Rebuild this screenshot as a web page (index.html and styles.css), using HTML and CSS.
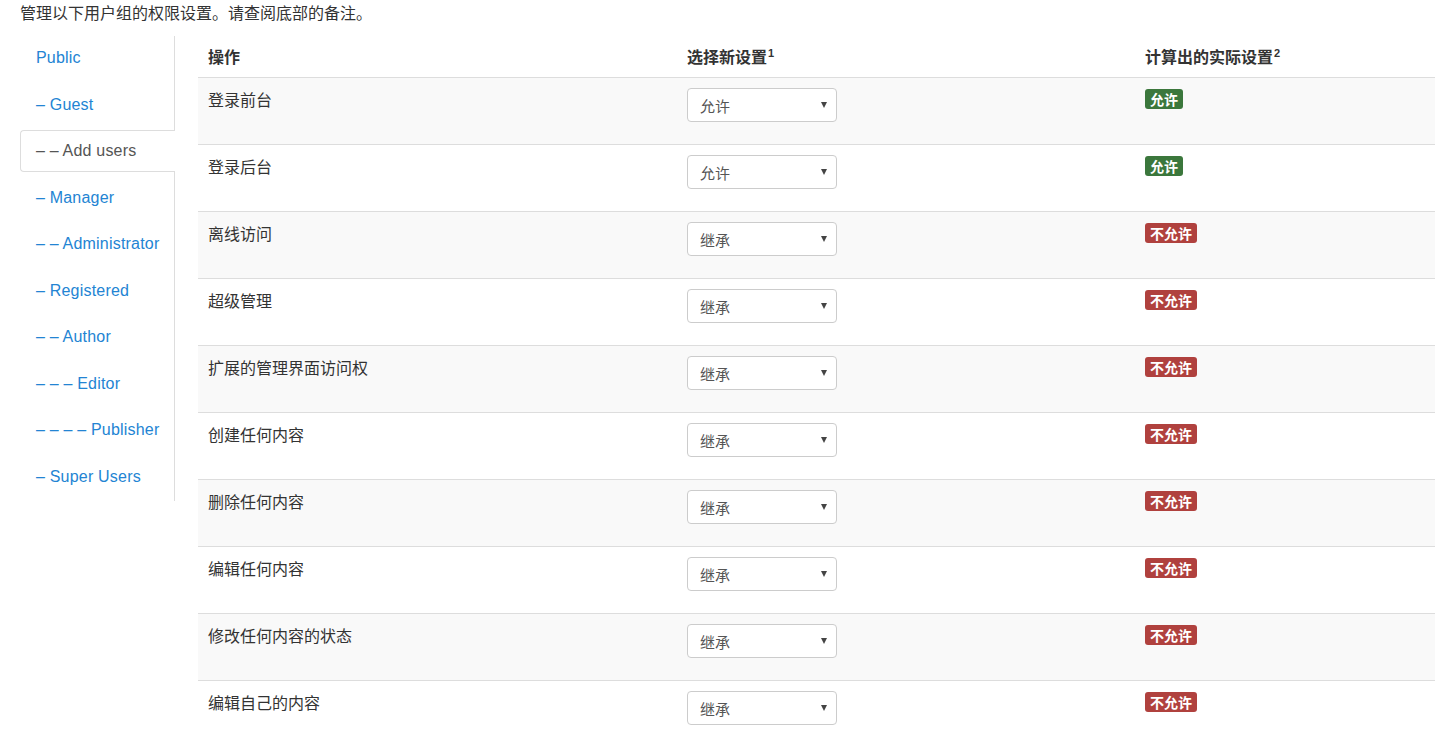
FILE: index.html
```html
<!DOCTYPE html>
<html lang="zh">
<head>
<meta charset="utf-8">
<title>权限设置</title>
<link rel="stylesheet" href="styles.css">
</head>
<body>
<div class="page">
  <p class="intro">管理以下用户组的权限设置。请查阅底部的备注。</p>
  <div class="layout">
    <ul class="groups">
      <li><a href="#">Public</a></li>
      <li><a href="#">– Guest</a></li>
      <li class="active"><a href="#">– – Add users</a></li>
      <li><a href="#">– Manager</a></li>
      <li><a href="#">– – Administrator</a></li>
      <li><a href="#">– Registered</a></li>
      <li><a href="#">– – Author</a></li>
      <li><a href="#">– – – Editor</a></li>
      <li><a href="#">– – – – Publisher</a></li>
      <li><a href="#">– Super Users</a></li>
    </ul>
    <div class="content">
      <table class="perms">
        <colgroup>
          <col class="c1"><col class="c2"><col class="c3">
        </colgroup>
        <thead>
          <tr>
            <th>操作</th>
            <th>选择新设置<sup>1</sup></th>
            <th>计算出的实际设置<sup>2</sup></th>
          </tr>
        </thead>
        <tbody>
          <tr>
            <td>登录前台</td>
            <td><div class="select"><select><option>允许</option></select><span class="caret"></span></div></td>
            <td><span class="badge ok">允许</span></td>
          </tr>
          <tr>
            <td>登录后台</td>
            <td><div class="select"><select><option>允许</option></select><span class="caret"></span></div></td>
            <td><span class="badge ok">允许</span></td>
          </tr>
          <tr>
            <td>离线访问</td>
            <td><div class="select"><select><option>继承</option></select><span class="caret"></span></div></td>
            <td><span class="badge no">不允许</span></td>
          </tr>
          <tr>
            <td>超级管理</td>
            <td><div class="select"><select><option>继承</option></select><span class="caret"></span></div></td>
            <td><span class="badge no">不允许</span></td>
          </tr>
          <tr>
            <td>扩展的管理界面访问权</td>
            <td><div class="select"><select><option>继承</option></select><span class="caret"></span></div></td>
            <td><span class="badge no">不允许</span></td>
          </tr>
          <tr>
            <td>创建任何内容</td>
            <td><div class="select"><select><option>继承</option></select><span class="caret"></span></div></td>
            <td><span class="badge no">不允许</span></td>
          </tr>
          <tr>
            <td>删除任何内容</td>
            <td><div class="select"><select><option>继承</option></select><span class="caret"></span></div></td>
            <td><span class="badge no">不允许</span></td>
          </tr>
          <tr>
            <td>编辑任何内容</td>
            <td><div class="select"><select><option>继承</option></select><span class="caret"></span></div></td>
            <td><span class="badge no">不允许</span></td>
          </tr>
          <tr>
            <td>修改任何内容的状态</td>
            <td><div class="select"><select><option>继承</option></select><span class="caret"></span></div></td>
            <td><span class="badge no">不允许</span></td>
          </tr>
          <tr>
            <td>编辑自己的内容</td>
            <td><div class="select"><select><option>继承</option></select><span class="caret"></span></div></td>
            <td><span class="badge no">不允许</span></td>
          </tr>
        </tbody>
      </table>
    </div>
  </div>
</div>
</body>
</html>
```

FILE: styles.css
```css
html, body {
  margin: 0;
  padding: 0;
  background: #fff;
}

body {
  font-family: "Liberation Sans", "Noto Sans CJK SC", sans-serif;
  font-size: 16px;
  color: #333;
  overflow: hidden;
}

.page {
  padding-left: 20px;
}

.intro {
  margin: 0 0 9px 0;
  font-size: 16px;
  line-height: 27px;
  color: #333;
}

.layout {
  display: flex;
  align-items: flex-start;
  gap: 23px;
}

.groups {
  list-style: none;
  margin: 0;
  padding: 0;
  width: 154px;
  flex: 0 0 154px;
  border-right: 1px solid #ddd;
}

.groups li {
  padding-top: 1px;
  margin-bottom: 3.5px;
}

.groups a {
  display: block;
  padding: 10px 15px;
  line-height: 20px;
  border: 1px solid transparent;
  border-right: 0;
  margin-right: -1px;
  border-radius: 4px 0 0 4px;
  color: #2384d3;
  text-decoration: none;
  white-space: nowrap;
  font-size: 16px;
  letter-spacing: 0.2px;
}

.groups li.active a {
  color: #555;
  background: #fff;
  border-color: #ddd;
  padding-right: 16px;
}

.content {
  flex: 1 1 auto;
  min-width: 0;
}

.perms {
  width: 100%;
  table-layout: fixed;
  border-collapse: separate;
  border-spacing: 0;
  font-family: "Noto Sans CJK SC", "Liberation Sans", sans-serif;
}

.perms col.c1 { width: 479px; }
.perms col.c2 { width: 458px; }
.perms col.c3 { width: auto; }

.perms th {
  text-align: left;
  font-weight: bold;
  font-size: 16px;
  line-height: 21px;
  padding: 10px 10px;
  border-bottom: 1px solid #ddd;
  color: #333;
}

.perms sup {
  font-family: "Liberation Sans", sans-serif;
  font-size: 11px;
  line-height: 0;
  position: relative;
  vertical-align: baseline;
  top: -6px;
  margin-left: 1px;
}

.perms td {
  vertical-align: top;
  padding: 10px;
  height: 46px;
  font-size: 16px;
  line-height: 22px;
  border-bottom: 1px solid #ddd;
  color: #333;
}

.perms tbody tr:nth-child(odd) td {
  background: #f9f9f9;
}

.select {
  position: relative;
  width: 150px;
  height: 34px;
}

.select select {
  appearance: none;
  -webkit-appearance: none;
  box-sizing: border-box;
  width: 150px;
  height: 34px;
  margin: 0;
  padding: 0 24px 0 12px;
  border: 1px solid #ccc;
  border-radius: 4px;
  background: #fff;
  font-family: "Noto Sans CJK SC", sans-serif;
  font-size: 15px;
  color: #555;
}

.caret {
  position: absolute;
  right: 10px;
  top: 14px;
  width: 0;
  height: 0;
  border-left: 3.5px solid transparent;
  border-right: 3.5px solid transparent;
  border-top: 6px solid #444;
  pointer-events: none;
}

.badge {
  display: inline-block;
  margin-top: 1px;
  padding: 0 5px;
  height: 20px;
  line-height: 20px;
  font-size: 14px;
  font-weight: bold;
  color: #fff;
  border-radius: 3px;
  vertical-align: top;
}

.badge.ok {
  background: #3b773c;
}

.badge.no {
  background: #b0413e;
}
```
